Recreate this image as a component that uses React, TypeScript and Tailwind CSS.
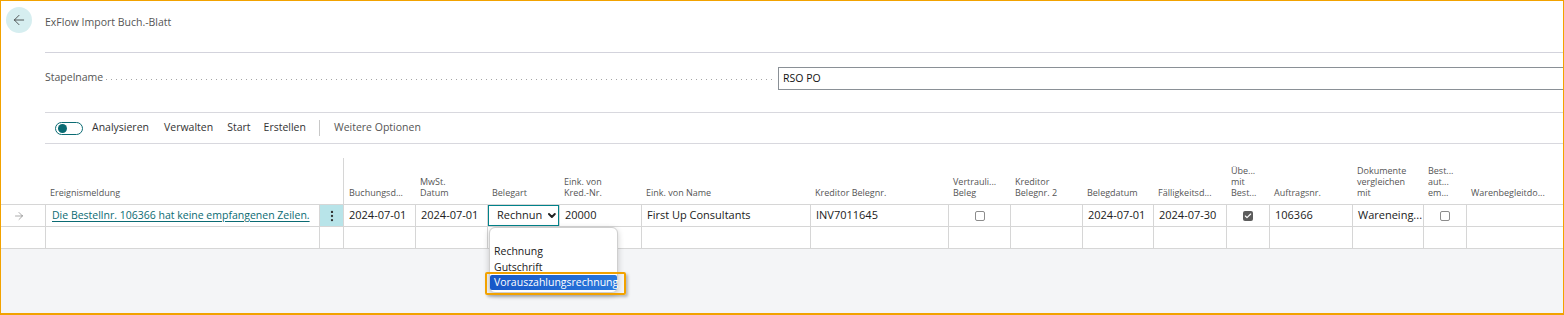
import { ArrowLeft, ArrowRight, Check, ChevronDown, EllipsisVertical } from "lucide-react";

type Col = {
  key: string;
  width: string;
  header: string[];
};

const columns: Col[] = [
  { key: "msg", width: "w-[274px]", header: ["Ereignismeldung"] },
  { key: "dots", width: "w-[24px]", header: [] },
  { key: "buch", width: "w-[72px]", header: ["Buchungsd..."] },
  { key: "mwst", width: "w-[72px]", header: ["MwSt.", "Datum"] },
  { key: "art", width: "w-[72px]", header: ["Belegart"] },
  { key: "kred", width: "w-[82px]", header: ["Eink. von", "Kred.-Nr."] },
  { key: "name", width: "w-[169px]", header: ["Eink. von Name"] },
  { key: "kbel", width: "w-[138px]", header: ["Kreditor Belegnr."] },
  { key: "vert", width: "w-[62px]", header: ["Vertrauli...", "Beleg"] },
  { key: "kbel2", width: "w-[72px]", header: ["Kreditor", "Belegnr. 2"] },
  { key: "bdat", width: "w-[71px]", header: ["Belegdatum"] },
  { key: "fael", width: "w-[73px]", header: ["Fälligkeitsd..."] },
  { key: "ube", width: "w-[43px]", header: ["Übe...", "mit", "Best..."] },
  { key: "auft", width: "w-[83px]", header: ["Auftragsnr."] },
  { key: "dok", width: "w-[71px]", header: ["Dokumente", "vergleichen", "mit"] },
  { key: "best", width: "w-[43px]", header: ["Best...", "aut...", "em..."] },
  { key: "ware", width: "w-[96px]", header: ["Warenbegleitdo..."] },
];

function Checkbox({ checked }: { checked?: boolean }) {
  if (checked) {
    return (
      <span className="flex h-[10px] w-[10px] items-center justify-center rounded-[2px] bg-[#5c5c5c]">
        <Check size={8} strokeWidth={3.5} color="#ffffff" />
      </span>
    );
  }
  return <span className="block h-[10px] w-[10px] rounded-[2px] border border-[#8c8c8c] bg-white" />;
}

function cellContent(key: string) {
  switch (key) {
    case "msg":
      return (
        <span className="pl-[6px] text-[10.5px] whitespace-nowrap text-[#0b6b73] underline decoration-[#0b6b73] underline-offset-2">
          Die Bestellnr. 106366 hat keine empfangenen Zeilen.
        </span>
      );
    case "dots":
      return (
        <span className="flex h-full w-full items-center justify-center bg-[#b8e4e9]">
          <EllipsisVertical size={14} strokeWidth={2} color="#333" />
        </span>
      );
    case "buch":
    case "mwst":
    case "bdat":
      return <span className="pl-[5px]">2024-07-01</span>;
    case "art":
      return (
        <span className="relative flex h-full w-full items-center border border-[#00828a] bg-white pl-[8px]">
          <span>Rechnun</span>
          <ChevronDown size={13} strokeWidth={4} color="#222" className="ml-[4px]" />
        </span>
      );
    case "kred":
      return <span className="pl-[5px]">20000</span>;
    case "name":
      return <span className="pl-[5px]">First Up Consultants</span>;
    case "kbel":
      return <span className="pl-[5px]">INV7011645</span>;
    case "vert":
    case "best":
      return (
        <span className="flex w-full justify-center">
          <Checkbox />
        </span>
      );
    case "ube":
      return (
        <span className="flex w-full justify-center">
          <Checkbox checked />
        </span>
      );
    case "fael":
      return <span className="pl-[5px]">2024-07-30</span>;
    case "auft":
      return <span className="pl-[5px]">106366</span>;
    case "dok":
      return <span className="pl-[5px]">Wareneing...</span>;
    default:
      return null;
  }
}

export default function App() {
  return (
    <div className="flex h-[315px] w-[1564px] flex-col overflow-hidden border border-b-2 border-[#f2a200] bg-white font-['Open_Sans',sans-serif] text-[#212121]">
      {/* title */}
      <div className="flex h-[52px] shrink-0">
        <div className="w-[44px] shrink-0 pl-[5px] pt-[6px]">
          <button className="flex h-[26px] w-[26px] items-center justify-center rounded-full bg-[#d6eef0]">
            <ArrowLeft size={16} strokeWidth={1.2} color="#333" />
          </button>
        </div>
        <div className="flex-1 border-b border-[#d3d3dc] pt-[14px] text-[10.5px] text-[#555]">
          ExFlow Import Buch.-Blatt
        </div>
      </div>

      {/* Stapelname */}
      <div className="flex h-[60px] shrink-0">
        <div className="w-[44px] shrink-0" />
        <div className="flex flex-1 items-start border-b border-[#d8d8de] pt-[14px]">
          <div className="flex h-[22px] w-[733px] shrink-0 items-center">
            <span className="text-[10.5px] text-[#555]">Stapelname</span>
            <span className="ml-[3px] mr-[6px] mt-[2px] h-px flex-1 bg-[linear-gradient(to_right,#a6a6a6_1px,transparent_1px)] bg-[length:5px_1px] bg-repeat-x" />
          </div>
          <div className="-mr-px flex h-[23px] flex-1 items-center border border-[#8a9096] pl-[4px] text-[10.5px] text-[#111]">
            RSO PO
          </div>
        </div>
      </div>

      {/* toolbar */}
      <div className="flex h-[31px] shrink-0">
        <div className="w-[44px] shrink-0" />
        <div className="flex flex-1 items-center border-b border-[#d8d8de] pl-[10px] text-[10.5px] text-[#333]">
          <span className="flex h-[13px] w-[28px] items-center rounded-full border border-[#0b6b73] pl-[2px]">
            <span className="h-[9px] w-[9px] rounded-full bg-[#0b6b73]" />
          </span>
          <span className="ml-[9px]">Analysieren</span>
          <span className="ml-[15px]">Verwalten</span>
          <span className="ml-[14px]">Start</span>
          <span className="ml-[13px]">Erstellen</span>
          <span className="ml-[13px] h-[16px] w-px bg-[#c8c8c8]" />
          <span className="ml-[14px] text-[#555]">Weitere Optionen</span>
        </div>
      </div>

      {/* table */}
      <div className="relative flex flex-col">
        <div className="h-[14px]" />
        <div className="flex h-[47px] border-b border-[#d6d6d6]">
          <div className="w-[44px] shrink-0" />
          {columns.map((c) => (
            <div
              key={c.key}
              className={`${c.width} flex shrink-0 flex-col justify-end pb-[6px] pl-[5px] text-[9px] leading-[11px] text-[#555] ${
                c.key === "buch" ? "border-l border-[#d6d6d6]" : ""
              }`}
            >
              {c.header.map((h) => (
                <span key={h} className="whitespace-nowrap">
                  {h}
                </span>
              ))}
            </div>
          ))}
        </div>

        <div className="flex h-[22px] border-b border-[#d6d6d6] text-[11px]">
          <div className="flex w-[44px] shrink-0 items-center pl-[12px]">
            <ArrowRight size={12} strokeWidth={1} color="#555" />
          </div>
          {columns.map((c) => (
            <div
              key={c.key}
              className={`${c.width} flex shrink-0 items-center overflow-hidden whitespace-nowrap border-l border-[#d6d6d6]`}
            >
              {cellContent(c.key)}
            </div>
          ))}
        </div>

        <div className="flex h-[22px] border-b border-[#d6d6d6]">
          <div className="w-[44px] shrink-0" />
          {columns.map((c) => (
            <div key={c.key} className={`${c.width} shrink-0 border-l border-[#d6d6d6]`} />
          ))}
        </div>

        {/* dropdown list */}
        <div className="absolute left-[488px] top-[83px] w-[129px] rounded-[6px] border border-[#cfcfcf] bg-white pb-[2px] text-[10.5px] shadow-[0_2px_6px_rgba(0,0,0,0.2)]">
          <div className="h-[15px]" />
          <div className="h-[16px] pl-[4px] leading-[16px]">Rechnung</div>
          <div className="h-[16px] pl-[4px] leading-[16px]">Gutschrift</div>
          <div className="h-[15px] rounded-[2px] bg-[linear-gradient(to_right,#1858c8,#2a78dc)] pl-[4px] leading-[15px] text-white">
            Vorauszahlungsrechnung
          </div>
        </div>
        <div className="absolute left-[484px] top-[128px] h-[23px] w-[141px] rounded-[2px] border-2 border-[#f2a200] shadow-[2px_2px_3px_rgba(0,0,0,0.25)]" />
      </div>

      <div className="flex-1 bg-[#f4f5f7]" />
    </div>
  );
}
